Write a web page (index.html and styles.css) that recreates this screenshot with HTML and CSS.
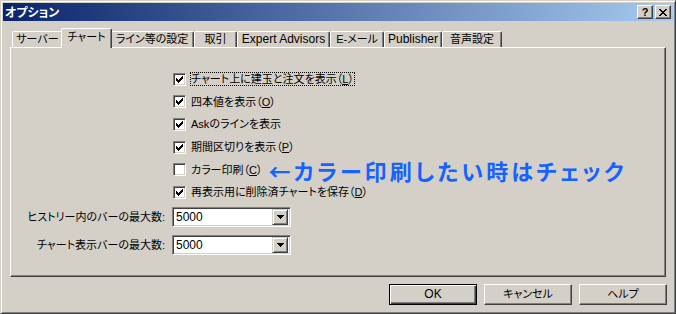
FILE: index.html
```html
<!DOCTYPE html>
<html lang="ja">

<head>
    <meta charset="UTF-8">
    <title>オプション</title>
    <link rel="stylesheet" href="styles.css">
</head>

<body>
    <div class="window">
        <div class="titlebar">
            <span class="title">オプション</span>
            <div class="caption-btns">
                <div class="cap-btn help">?</div>
                <div class="cap-btn">
                    <svg width="8" height="7" viewBox="0 0 8 7" shape-rendering="crispEdges">
                        <path d="M0 0h2v1h-2z M6 0h2v1h-2z M1 1h2v1h-2z M5 1h2v1h-2z M2 2h4v1h-4z M3 3h2v1h-2z M2 4h4v1h-4z M1 5h2v1h-2z M5 5h2v1h-2z M0 6h2v1h-2z M6 6h2v1h-2z" fill="#000"/>
                    </svg>
                </div>
            </div>
        </div>

        <div class="body">
            <div class="tabs">
                <div class="tab t-server">サーバー</div>
                <div class="tab t-chart active">チャート</div>
                <div class="tab t-line">ライン等の設定</div>
                <div class="tab t-trade">取引</div>
                <div class="tab t-ea latin">Expert Advisors</div>
                <div class="tab t-mail">E-メール</div>
                <div class="tab t-pub latin">Publisher</div>
                <div class="tab t-sound">音声設定</div>
            </div>

            <div class="panel">
                <div class="checks">
                    <div class="row">
                        <span class="cb"><svg width="7" height="7" viewBox="0 0 7 7" shape-rendering="crispEdges"><path d="M0 2H1V3H2V4H3V3H4V2H5V1H6V0H7V3H6V4H5V5H4V6H3V7H2V6H1V5H0Z" fill="#000"/></svg></span>
                        <span class="lbl focus">チャート上に建玉と注文を表示（<u>L</u>）</span>
                    </div>
                    <div class="row">
                        <span class="cb"><svg width="7" height="7" viewBox="0 0 7 7" shape-rendering="crispEdges"><path d="M0 2H1V3H2V4H3V3H4V2H5V1H6V0H7V3H6V4H5V5H4V6H3V7H2V6H1V5H0Z" fill="#000"/></svg></span>
                        <span class="lbl">四本値を表示（<u>O</u>）</span>
                    </div>
                    <div class="row">
                        <span class="cb"><svg width="7" height="7" viewBox="0 0 7 7" shape-rendering="crispEdges"><path d="M0 2H1V3H2V4H3V3H4V2H5V1H6V0H7V3H6V4H5V5H4V6H3V7H2V6H1V5H0Z" fill="#000"/></svg></span>
                        <span class="lbl">Askのラインを表示</span>
                    </div>
                    <div class="row">
                        <span class="cb"><svg width="7" height="7" viewBox="0 0 7 7" shape-rendering="crispEdges"><path d="M0 2H1V3H2V4H3V3H4V2H5V1H6V0H7V3H6V4H5V5H4V6H3V7H2V6H1V5H0Z" fill="#000"/></svg></span>
                        <span class="lbl">期間区切りを表示（<u>P</u>）</span>
                    </div>
                    <div class="row">
                        <span class="cb"></span>
                        <span class="lbl">カラー印刷（<u>C</u>）</span>
                        <span class="note">←カラー印刷したい時はチェック</span>
                    </div>
                    <div class="row">
                        <span class="cb"><svg width="7" height="7" viewBox="0 0 7 7" shape-rendering="crispEdges"><path d="M0 2H1V3H2V4H3V3H4V2H5V1H6V0H7V3H6V4H5V5H4V6H3V7H2V6H1V5H0Z" fill="#000"/></svg></span>
                        <span class="lbl">再表示用に削除済チャートを保存（<u>D</u>）</span>
                    </div>
                </div>

                <div class="limits">
                    <label>ヒストリー内のバーの最大数:</label>
                    <div class="combo">
                        <span class="value">5000</span>
                        <span class="drop"><svg width="7" height="4" viewBox="0 0 7 4" shape-rendering="crispEdges"><path d="M0 0H7V1H6V2H5V3H4V4H3V3H2V2H1V1H0Z" fill="#000"/></svg></span>
                    </div>
                    <label>チャート表示バーの最大数:</label>
                    <div class="combo">
                        <span class="value">5000</span>
                        <span class="drop"><svg width="7" height="4" viewBox="0 0 7 4" shape-rendering="crispEdges"><path d="M0 0H7V1H6V2H5V3H4V4H3V3H2V2H1V1H0Z" fill="#000"/></svg></span>
                    </div>
                </div>
            </div>

            <div class="buttons">
                <div class="btn default latin">OK</div>
                <div class="btn">キャンセル</div>
                <div class="btn">ヘルプ</div>
            </div>
        </div>
    </div>
</body>

</html>
```

FILE: styles.css
```css
body {
    margin: 0;
    font-family: "Liberation Sans", "Noto Sans CJK JP", sans-serif;
    font-size: 11px;
    font-feature-settings: "palt";
    color: #000;
}

.latin {
    font-size: 12px;
}

.window {
    width: 676px;
    height: 314px;
    box-sizing: border-box;
    background-color: #d4d0c8;
    border: 1px solid;
    border-color: #d4d0c8 #404040 #404040 #d4d0c8;
    box-shadow: inset 1px 1px #fff, inset -1px -1px #808080;
    padding: 2px;
    display: flex;
    flex-direction: column;
}

.titlebar {
    height: 18px;
    flex: none;
    display: flex;
    align-items: center;
    padding: 0 2px 0 2px;
    background: linear-gradient(to right, #0a246a, #a6caf0);
}

.title {
    color: #fff;
    font-weight: bold;
    font-size: 12px;
    font-family: "Noto Sans CJK JP", sans-serif;
    line-height: 16px;
}

.caption-btns {
    margin-left: auto;
    display: flex;
    gap: 2px;
}

.cap-btn {
    width: 16px;
    height: 14px;
    box-sizing: border-box;
    background-color: #d4d0c8;
    border: 1px solid;
    border-color: #fff #404040 #404040 #fff;
    box-shadow: inset -1px -1px #808080;
    display: flex;
    align-items: center;
    justify-content: center;
}

.cap-btn.help {
    font-weight: bold;
    font-size: 11px;
    line-height: 12px;
}

.body {
    flex: 1;
    padding: 7px 7px 0 7px;
}

/* tabs */
.tabs {
    height: 19px;
    display: flex;
    align-items: flex-end;
    padding-left: 2px;
}

.tab {
    height: 16px;
    box-sizing: border-box;
    border: 1px solid;
    border-bottom: none;
    border-color: #fff #404040 #404040 #fff;
    border-radius: 2px 2px 0 0;
    box-shadow: inset -1px 0 #808080;
    text-align: center;
    line-height: 15px;
    white-space: nowrap;
    overflow: hidden;
}

.tab.active {
    height: 20px;
    margin: 0 -2px -1px -2px;
    position: relative;
    z-index: 1;
    background-color: #d4d0c8;
    line-height: 17px;
}

.t-server { width: 51px; }
.t-chart { width: 51px; }
.t-line { width: 84px; }
.t-trade { width: 43px; }
.t-ea { width: 93px; }
.t-mail { width: 54px; }
.t-pub { width: 58px; }
.t-sound { width: 60px; }

/* panel */
.panel {
    height: 230px;
    box-sizing: border-box;
    border: 1px solid;
    border-color: #fff #404040 #404040 #fff;
    box-shadow: inset -1px -1px #808080;
    padding-top: 20px;
}

.checks {
    padding-left: 162px;
}

.row {
    height: 22.6px;
    display: flex;
    align-items: center;
}

.cb {
    width: 13px;
    height: 13px;
    box-sizing: border-box;
    flex: none;
    background-color: #fff;
    border: 1px solid;
    border-color: #808080 #fff #fff #808080;
    box-shadow: inset 1px 1px #404040, inset -1px -1px #d4d0c8;
    display: flex;
    align-items: center;
    justify-content: center;
    margin-right: 4px;
}

.lbl {
    line-height: 14px;
    padding: 0 1px;
    white-space: nowrap;
}

.lbl.focus {
    outline: 1px dotted #000;
    outline-offset: -1px;
}

.note {
    margin-left: 5px;
    color: #1463ff;
    font-family: "Noto Sans CJK JP", sans-serif;
    font-weight: 700;
    font-size: 22px;
    letter-spacing: 3.1px;
    line-height: 22px;
    white-space: nowrap;
}

.limits {
    margin-top: 3px;
    display: grid;
    grid-template-columns: 154px 119px;
    column-gap: 7px;
    row-gap: 8px;
}

.limits label {
    text-align: right;
    line-height: 20px;
    white-space: nowrap;
}

.combo {
    height: 20px;
    box-sizing: border-box;
    background-color: #fff;
    border: 1px solid;
    border-color: #808080 #fff #fff #808080;
    box-shadow: inset 1px 1px #404040, inset -1px -1px #d4d0c8;
    padding: 2px;
    display: flex;
    align-items: center;
    font-size: 12px;
}

.combo .value {
    flex: 1;
    padding-left: 1px;
    line-height: 14px;
}

.drop {
    width: 16px;
    height: 16px;
    box-sizing: border-box;
    background-color: #d4d0c8;
    border: 1px solid;
    border-color: #d4d0c8 #404040 #404040 #d4d0c8;
    box-shadow: inset 1px 1px #fff, inset -1px -1px #808080;
    display: flex;
    align-items: center;
    justify-content: center;
}

/* bottom buttons */
.buttons {
    display: flex;
    justify-content: flex-end;
    gap: 7px;
    margin-top: 7px;
    margin-right: -1px;
}

.btn {
    width: 88px;
    height: 21px;
    box-sizing: border-box;
    border: 1px solid;
    border-color: #fff #404040 #404040 #fff;
    box-shadow: inset -1px -1px #808080;
    text-align: center;
    line-height: 19px;
}

.btn.default {
    border-color: #000;
    box-shadow: inset 1px 1px #fff, inset -1px -1px #404040, inset -2px -2px #808080;
}
```
